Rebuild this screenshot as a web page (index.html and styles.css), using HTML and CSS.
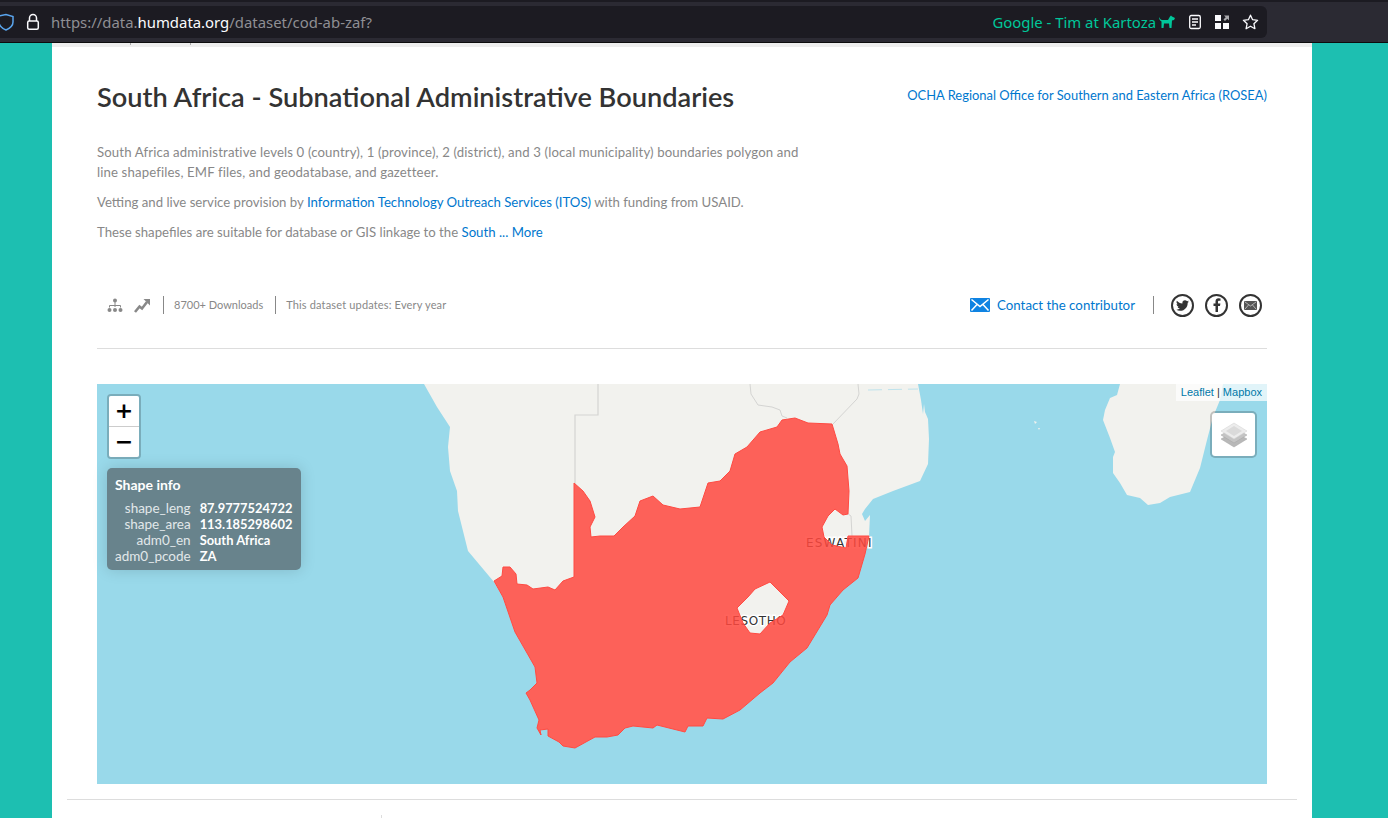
FILE: index.html
```html
<!DOCTYPE html>
<html lang="en">
<head>
    <meta charset="UTF-8">
    <meta name="viewport" content="width=device-width, initial-scale=1.0">
    <title>South Africa - Subnational Administrative Boundaries</title>
    <link rel="stylesheet" href="styles.css">
</head>
<body>

<!-- browser toolbar -->
<div class="toolbar">
    <div class="urlbar">
        <svg class="shield" width="14" height="18" viewBox="0 0 14 18"><path d="M-1 3 L6 1.500 L13 3.500 V9 C13 13 9.500 15.500 6 17 C2.500 15.500 -1 13 -1 9 Z" fill="none" stroke="#5aa5ee" stroke-width="1.500"/></svg>
        <svg class="lock" width="14" height="18" viewBox="0 0 14 18"><path d="M3.500 8 V5 a3.500 3.500 0 0 1 7 0 V8" fill="none" stroke="#fbfbfe" stroke-width="1.500"/><rect x="1.700" y="8" width="10.600" height="8.300" rx="1.500" fill="none" stroke="#fbfbfe" stroke-width="1.500"/></svg>
        <span class="url">https://data.<b>humdata.org</b>/dataset/cod-ab-zaf?</span>
        <span class="account">Google - Tim at Kartoza</span>
        <svg class="dog" width="16" height="14" viewBox="0 0 16 14"><path d="M0 2 C1 4 2 5 3 5 H9 L11 1.500 L12 0.500 L13 1.500 L16 3 L15 5 L13 5.500 L12.500 13 H10.500 L10 8.500 H5 L4.500 13 H2.500 L2.500 6.500 C1 5.500 0 4 0 2 Z" fill="#00c79a"/></svg>
        <svg class="tool" width="14" height="16" viewBox="0 0 14 16"><rect x="1.700" y="1.500" width="10.600" height="13" rx="1.500" fill="none" stroke="#fbfbfe" stroke-width="1.300"/><path d="M4 5 H10 M4 8 H10 M4 11 H8" stroke="#fbfbfe" stroke-width="1.300"/></svg>
        <svg class="tool" width="16" height="16" viewBox="0 0 16 16"><rect x="1" y="1" width="6" height="6" fill="#fbfbfe"/><rect x="1" y="9" width="6" height="6" fill="#fbfbfe"/><rect x="9" y="9" width="6" height="6" fill="#fbfbfe"/><path d="M10 1.500 H15 V6.500 L13.300 4.800 L11 7 L9.500 5.500 L11.700 3.200 Z" fill="#a9a9ad"/></svg>
        <svg class="tool" width="17" height="16" viewBox="0 0 17 16"><path d="M8.500 1.200 L10.600 5.700 L15.600 6.300 L11.900 9.700 L12.900 14.700 L8.500 12.200 L4.100 14.700 L5.100 9.700 L1.400 6.300 L6.400 5.700 Z" fill="none" stroke="#fbfbfe" stroke-width="1.300" stroke-linejoin="round"/></svg>
    </div>
</div>

<div class="sheet">
    <div class="crumb-strip"><i></i><i></i></div>

    <div class="head">
        <h1>South Africa - Subnational Administrative Boundaries</h1>
        <a class="org" href="#">OCHA Regional Office for Southern and Eastern Africa (ROSEA)</a>
    </div>

    <div class="notes">
        <p class="lead">South Africa administrative levels 0 (country), 1 (province), 2 (district), and 3 (local municipality) boundaries polygon and line shapefiles, EMF files, and geodatabase, and gazetteer.</p>
        <p>Vetting and live service provision by <a href="#">Information Technology Outreach Services (ITOS)</a> with funding from USAID.</p>
        <p>These shapefiles are suitable for database or GIS linkage to the <a href="#">South ... More</a></p>
    </div>

    <div class="meta">
        <div class="meta-left">
            <svg class="icon-tree" width="16" height="15" viewBox="0 0 16 15"><circle cx="8" cy="2.500" r="2" fill="#888"/><path d="M8 4 V9 M2.500 9.500 V7.500 H13.500 V9.500" fill="none" stroke="#888"/><circle cx="2.500" cy="12" r="2" fill="#888"/><circle cx="8" cy="12" r="2" fill="#888"/><circle cx="13.500" cy="12" r="2" fill="#888"/></svg>
            <svg class="icon-trend" width="16" height="15" viewBox="0 0 16 15"><path d="M1 14 L5.500 8.500 L8 10.500 L13 4" fill="none" stroke="#888" stroke-width="2.600"/><path d="M9.500 1 H16 V7.500 Z" fill="#888"/></svg>
            <span class="stat">8700+ Downloads</span>
            <span class="stat stat-wide">This dataset updates: Every year</span>
        </div>
        <div class="meta-right">
            <a class="contact" href="#">
                <svg width="20" height="14" viewBox="0 0 20 14"><rect width="20" height="14" rx="1" fill="#0f83e2"/><path d="M1.500 1.500 L10 8.500 L18.500 1.500 M1.500 12.500 L7 6.500 M18.500 12.500 L13 6.500" fill="none" stroke="#fff" stroke-width="1.500"/></svg>
                Contact the contributor
            </a>
            <div class="share">
                <span class="round"><svg width="13" height="13" viewBox="0 0 24 24"><path d="M23.950 4.570a10 10 0 01-2.820.770 4.960 4.960 0 002.160-2.720c-.950.550-2 .960-3.130 1.190a4.920 4.920 0 00-8.380 4.480C7.690 8.100 4.070 6.130 1.640 3.160a4.820 4.820 0 00-.670 2.480c0 1.710.870 3.210 2.190 4.100a4.900 4.900 0 01-2.230-.620v.060a4.920 4.920 0 003.950 4.830 5 5 0 01-2.210.080 4.940 4.940 0 004.600 3.420A9.870 9.870 0 010 19.540a14 14 0 007.560 2.210c9.050 0 14-7.500 14-13.980 0-.210 0-.420-.020-.630a9.940 9.940 0 002.410-2.570z" fill="#333"/></svg></span>
                <span class="round"><svg width="8" height="14" viewBox="0 0 8 14"><path d="M2.500 14 V8 H0.500 V5.500 H2.500 V3.500 C2.500 1.300 3.700 0.300 5.500 0.300 L7.500 0.400 V2.700 H6.200 C5.300 2.700 5 3.100 5 3.900 V5.500 H7.400 L7 8 H5 V14 Z" fill="#333"/></svg></span>
                <span class="round"><svg width="13" height="9" viewBox="0 0 13 9"><rect width="13" height="9" rx="1" fill="#555"/><path d="M1 1 L6.500 5 L12 1 M1 8 L4.500 4 M12 8 L8.500 4" fill="none" stroke="#ddd" stroke-width=".7"/></svg></span>
            </div>
        </div>
    </div>

    <div class="map">
        <svg class="map-canvas" viewBox="97 384 1170 400" width="1170" height="400">
            <rect x="97" y="384" width="1170" height="400" fill="#99d9ea"/>
            <!-- mainland -->
            <path class="land" d="M424 384 L437 407 L450 427 L448 447 L450 471 L457 491 L458 511 L463 531 L468 551 L494 582 L503 597 L515 632 L535 667 L537 683 L530 690 L526 693 L530 700 L539 720 L537 728 L541 735 L540 730 L548 729 L548 736 L559 742 L563 746 L575 748 L595 737 L607 737 L618 735 L625 728 L633 726 L653 728 L657 725 L685 732 L688 726 L703 726 L707 718 L723 719 L740 710 L760 693 L773 683 L790 662 L807 648 L827 615 L830 605 L843 590 L858 578 L865 554 L869 536 L870 515 L865 521 L862 514 L865 509 L873 499 L893 491 L920 481 L928 464 L929 439 L928 419 L925 412 L924 404 L923 414 L921 400 L918 384 Z"/>
            <!-- madagascar -->
            <path class="land" d="M1120 384 L1117 395 L1110 398 L1105 410 L1103 420 L1110 438 L1115 452 L1113 457 L1113 473 L1120 483 L1127 495 L1140 498 L1148 505 L1160 503 L1170 497 L1190 492 L1200 468 L1207 440 L1213 417 L1220 400 L1223 384 Z"/>
            <path class="land" d="M1034 421 l3 1 l-2 2 Z M1038 428 l2 0 l-1 2 Z"/>
            <!-- country borders -->
            <path class="border" d="M598 384 V415 H575 V484"/>
            <path class="border thin" d="M750 384 L751 394 L758 405 L772 407 L780 410 L782 416 L787 418 M833 424 L857 399 L859 394 L858 384 M848 514 L851 516 L852 536"/>
            <path class="coast-dash" d="M868 390 L918 389"/>
            <!-- place labels, the red shape sits above them -->
            <text class="place" x="806" y="547">ESWATINI</text>
            <text class="place place-tight" x="725" y="625">LESOTHO</text>
            <!-- South Africa -->
            <path class="shape" fill-rule="evenodd" d="M574 483 L583 491 L590 501 L595 517 L590 527 L591 537 L600 536 L614 536 L623 527 L635 516 L640 501 L653 496 L663 505 L680 509 L690 508 L700 507 L708 483 L720 481 L730 471 L735 454 L747 447 L760 432 L777 427 L782 420 L795 418 L808 423 L832 424 L838 444 L840 454 L847 466 L849 491 L848 514 L843 515 L835 509 L828 516 L822 527 L824 537 L832 545 L846 548 L848 536 L869 536 L865 554 L858 578 L843 590 L830 605 L827 615 L807 648 L790 662 L773 683 L760 693 L740 710 L723 719 L707 718 L703 726 L688 726 L685 732 L657 725 L653 728 L633 726 L625 728 L618 735 L607 737 L595 737 L575 748 L563 746 L559 742 L548 736 L548 729 L540 730 L541 735 L537 728 L539 720 L530 700 L526 693 L530 690 L537 683 L535 667 L515 632 L503 597 L494 581 L502 576 L503 567 L510 567 L516 574 L517 584 L527 585 L533 589 L548 587 L555 590 L563 581 L574 577 Z M737 608 L748 597 L755 589 L770 582 L780 592 L789 601 L783 615 L770 623 L760 634 L750 633 L743 623 Z"/>
        </svg>

        <div class="zoom-ctl">
            <button type="button">+</button>
            <button type="button">−</button>
        </div>

        <div class="attribution"><a href="#">Leaflet</a> | <a href="#">Mapbox</a></div>

        <div class="layers-ctl">
            <svg width="28" height="26" viewBox="0 0 28 26">
                <path d="M14 10 L27 17 L14 25 L1 17 Z" fill="#b8b8b8" stroke="#a5a5a5" stroke-width=".5"/>
                <path d="M14 6 L27 13 L14 21 L1 13 Z" fill="#c4c4c4" stroke="#a5a5a5" stroke-width=".5"/>
                <path d="M14 1 L27 9 L14 17 L1 9 Z" fill="#ececec" stroke="#d0d0d0" stroke-width=".5"/>
                <path d="M14 4 L22 9 L14 14 L6 9 Z" fill="#dadada"/>
            </svg>
        </div>

        <div class="shape-info">
            <h4>Shape info</h4>
            <table>
                <tr><td>shape_leng</td><th>87.9777524722</th></tr>
                <tr><td>shape_area</td><th>113.185298602</th></tr>
                <tr><td>adm0_en</td><th>South Africa</th></tr>
                <tr><td>adm0_pcode</td><th>ZA</th></tr>
            </table>
        </div>
    </div>

    <div class="footer-rule"><i></i></div>
</div>

</body>
</html>
```

FILE: styles.css
```css
html, body {
    margin: 0;
    padding: 0;
    height: 818px;
    overflow: hidden;
}

body {
    font-family: 'Lato', 'Noto Sans', sans-serif;
    background-color: #1dbfb1;
}

a {
    color: #0077ce;
    text-decoration: none;
}

/* browser toolbar */
.toolbar {
    height: 43px;
    box-sizing: border-box;
    padding: 6px 121px 4px 0;
    display: flex;
    background: linear-gradient(#1c1b22 0, #1c1b22 2px, #2b2a33 2px);
    border-bottom: 1px solid #0c0c0d;
}

.urlbar {
    flex: 1;
    display: flex;
    align-items: center;
    padding-right: 8px;
    background-color: #1c1b22;
    border-radius: 0 6px 6px 0;
    font-family: 'Noto Sans', sans-serif;
    font-size: 14.9px;
}

.shield {
    flex: none;
    margin-right: 12px;
}

.lock {
    margin-right: 11px;
    flex: none;
}

.url {
    color: #8f8f94;
    flex: 1;
}

.url b {
    color: #fbfbfe;
    font-weight: 400;
}

.account {
    color: #00c79a;
    margin-right: 3px;
}

.dog {
    margin-right: 5px;
}

.tool {
    margin-left: 12px;
}

.dog + .tool {
    margin-left: 8px;
}

/* white page */
.sheet {
    width: 1260px;
    height: 775px;
    margin-left: 52px;
    background-color: #ffffff;
    overflow: hidden;
}

.crumb-strip {
    height: 4px;
    background-color: #eeeeee;
    display: flex;
    padding-left: 78px;
    gap: 59px;
}

.crumb-strip i {
    width: 1px;
    height: 2px;
    background-color: #aaa;
}

.head {
    display: flex;
    justify-content: space-between;
    padding: 32px 45px 0;
    height: 37px;
}

h1 {
    margin: 0;
    font-size: 27.2px;
    line-height: 36px;
    font-weight: 600;
    color: #333333;
}

.org {
    font-size: 12.93px;
    line-height: 32px;
}

.notes {
    width: 712px;
    margin-left: 45px;
    height: 141px;
    padding-top: 26px;
    font-size: 13.2px;
    line-height: 20px;
    color: #888888;
}

.notes p {
    margin: 0 0 10px 0;
}

.notes .lead {
    letter-spacing: .13px;
}

.meta {
    display: flex;
    justify-content: space-between;
    align-items: center;
    height: 36px;
    margin: 4px 45px 0;
    padding-bottom: 25px;
    border-bottom: 1px solid #dddddd;
}

.meta-left {
    display: flex;
    align-items: center;
    padding-left: 10px;
    font-size: 11px;
    color: #888888;
}

.icon-trend {
    margin-left: 11px;
    margin-right: 13px;
}

.stat {
    border-left: 1px solid #888888;
    padding: 0 12px 0 10px;
    line-height: 18px;
}

.stat-wide {
    letter-spacing: .16px;
}

.meta-right {
    display: flex;
    align-items: center;
}

.contact {
    display: flex;
    align-items: center;
    gap: 7px;
    font-size: 13.3px;
    padding-right: 18px;
    border-right: 1px solid #888888;
    line-height: 18px;
}

.share {
    display: flex;
    gap: 11px;
    padding: 0 5px 0 17px;
}

.round {
    width: 19px;
    height: 19px;
    border: 2px solid #333333;
    border-radius: 50%;
    display: flex;
    align-items: center;
    justify-content: center;
}

/* map */
.map {
    position: relative;
    width: 1170px;
    height: 400px;
    margin: 35px 0 0 45px;
}

.map-canvas {
    display: block;
}

.land {
    fill: #f2f2ee;
}

.border {
    fill: none;
    stroke: #d4d4d2;
    stroke-width: 1.2;
}

.border.thin {
    stroke-width: 1;
}

.coast-dash {
    fill: none;
    stroke: #bfe3ec;
    stroke-width: 1;
    stroke-dasharray: 14 6;
}

.place {
    font-family: 'DejaVu Sans', sans-serif;
    font-size: 12px;
    letter-spacing: 1.2px;
    fill: #333333;
    stroke: #ffffff;
    stroke-width: 3px;
    paint-order: stroke;
}

.place-tight {
    letter-spacing: .6px;
}

.shape {
    fill: #ff483e;
    fill-opacity: .85;
    stroke: #ff4a42;
    stroke-width: 1;
}

.zoom-ctl {
    position: absolute;
    top: 10px;
    left: 10px;
    width: 30px;
    border: 2px solid rgba(0, 0, 0, 0.2);
    border-radius: 4px;
}

.zoom-ctl button {
    display: block;
    width: 30px;
    height: 30px;
    padding: 0;
    border: none;
    background-color: #ffffff;
    font-family: 'DejaVu Sans', sans-serif;
    font-size: 22px;
    font-weight: 700;
    line-height: 28px;
    color: #000000;
}

.zoom-ctl button:first-child {
    border-bottom: 1px solid #cccccc;
    height: 31px;
    border-radius: 2px 2px 0 0;
}

.zoom-ctl button:last-child {
    border-radius: 0 0 2px 2px;
}

.attribution {
    position: absolute;
    top: 0;
    right: 0;
    padding: 0 5px;
    font-family: 'Liberation Sans', sans-serif;
    font-size: 11px;
    line-height: 17px;
    color: #333333;
    background-color: rgba(255, 255, 255, 0.7);
}

.attribution a {
    color: #0078a8;
}

.layers-ctl {
    position: absolute;
    top: 27px;
    right: 10px;
    width: 43px;
    height: 43px;
    border: 2px solid rgba(0, 0, 0, 0.2);
    border-radius: 5px;
    background-color: #ffffff;
    background-clip: padding-box;
    display: flex;
    align-items: center;
    justify-content: center;
}

.shape-info {
    position: absolute;
    top: 84px;
    left: 10px;
    width: 178px;
    height: 86px;
    padding: 8px;
    border-radius: 5px;
    background-color: #68838c;
    box-shadow: 0 0 15px rgba(0, 0, 0, 0.15);
    color: #ffffff;
    font-size: 13.5px;
}

.shape-info h4 {
    margin: 0 0 6px 0;
    font-size: 14px;
    line-height: 18px;
    font-weight: 700;
}

.shape-info table {
    border-collapse: collapse;
}

.shape-info td {
    padding: 0 9px 0 0;
    text-align: right;
    line-height: 16px;
    color: #e2e8ea;
}

.shape-info th {
    padding: 0;
    text-align: left;
    font-size: 12.9px;
    line-height: 16px;
    font-weight: 700;
}

.footer-rule {
    margin: 15px 15px 0;
    height: 19px;
    border-top: 1px solid #dddddd;
}

.footer-rule i {
    display: block;
    width: 1px;
    height: 3px;
    margin: 15px 0 0 314px;
    background-color: #dddddd;
}
```
